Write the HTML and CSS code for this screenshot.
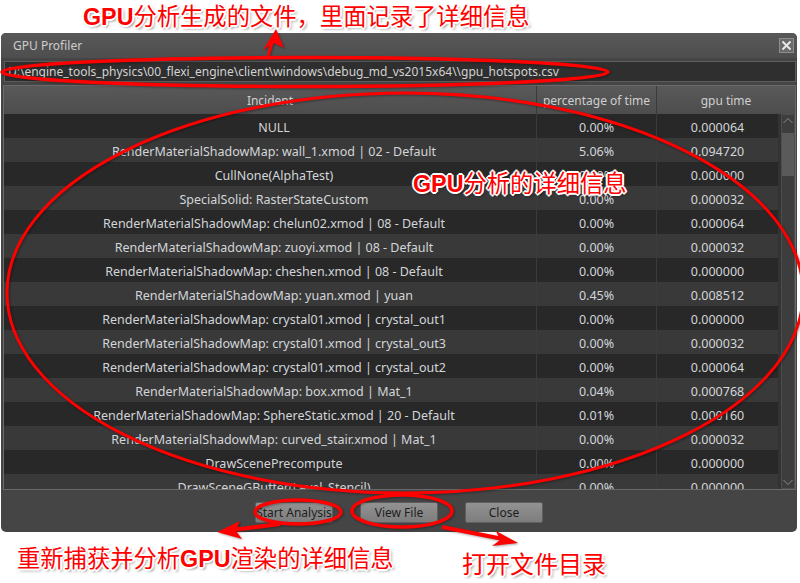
FILE: index.html
```html
<!DOCTYPE html>
<html lang="zh-CN">
<head>
<meta charset="utf-8">
<link rel="stylesheet" href="styles.css">
</head>
<body>
<div class="page">
  <div class="window">
    <div class="titlebar">
      <span class="title">GPU Profiler</span>
      <div class="close"><svg width="13" height="13" viewBox="0 0 13 13"><path d="M2.5 2.5 L10.5 10.5 M10.5 2.5 L2.5 10.5" stroke="#e8e8e8" stroke-width="2"/></svg></div>
    </div>
    <div class="pathbar">D:\engine_tools_physics\00_flexi_engine\client\windows\debug_md_vs2015x64\\gpu_hotspots.csv</div>
    <div class="table">
      <div class="thead">
        <div class="th">Incident</div>
        <div class="th">percentage of time</div>
        <div class="th">gpu time</div>
      </div>
      <div class="tbody">
        <div class="rows">
          <div class="row"><div class="td">NULL</div><div class="td">0.00%</div><div class="td">0.000064</div></div>
          <div class="row"><div class="td">RenderMaterialShadowMap: wall_1.xmod | 02 - Default</div><div class="td">5.06%</div><div class="td">0.094720</div></div>
          <div class="row"><div class="td">CullNone(AlphaTest)</div><div class="td">0.00%</div><div class="td">0.000000</div></div>
          <div class="row"><div class="td">SpecialSolid: RasterStateCustom</div><div class="td">0.00%</div><div class="td">0.000032</div></div>
          <div class="row"><div class="td">RenderMaterialShadowMap: chelun02.xmod | 08 - Default</div><div class="td">0.00%</div><div class="td">0.000064</div></div>
          <div class="row"><div class="td">RenderMaterialShadowMap: zuoyi.xmod | 08 - Default</div><div class="td">0.00%</div><div class="td">0.000032</div></div>
          <div class="row"><div class="td">RenderMaterialShadowMap: cheshen.xmod | 08 - Default</div><div class="td">0.00%</div><div class="td">0.000000</div></div>
          <div class="row"><div class="td">RenderMaterialShadowMap: yuan.xmod | yuan</div><div class="td">0.45%</div><div class="td">0.008512</div></div>
          <div class="row"><div class="td">RenderMaterialShadowMap: crystal01.xmod | crystal_out1</div><div class="td">0.00%</div><div class="td">0.000000</div></div>
          <div class="row"><div class="td">RenderMaterialShadowMap: crystal01.xmod | crystal_out3</div><div class="td">0.00%</div><div class="td">0.000032</div></div>
          <div class="row"><div class="td">RenderMaterialShadowMap: crystal01.xmod | crystal_out2</div><div class="td">0.00%</div><div class="td">0.000064</div></div>
          <div class="row"><div class="td">RenderMaterialShadowMap: box.xmod | Mat_1</div><div class="td">0.04%</div><div class="td">0.000768</div></div>
          <div class="row"><div class="td">RenderMaterialShadowMap: SphereStatic.xmod | 20 - Default</div><div class="td">0.01%</div><div class="td">0.000160</div></div>
          <div class="row"><div class="td">RenderMaterialShadowMap: curved_stair.xmod | Mat_1</div><div class="td">0.00%</div><div class="td">0.000032</div></div>
          <div class="row"><div class="td">DrawScenePrecompute</div><div class="td">0.00%</div><div class="td">0.000000</div></div>
          <div class="row"><div class="td">DrawSceneGBuffer(Level_Stencil)</div><div class="td">0.00%</div><div class="td">0.000000</div></div>
        </div>
        <div class="scrollbar">
          <svg class="chev" width="14" height="12" viewBox="0 0 14 12"><path d="M2.5 8 L7 3.5 L11.5 8" fill="none" stroke="#8a8a8a" stroke-width="1"/></svg>
          <div class="track"><div class="thumb"></div></div>
          <svg class="chev" width="14" height="12" viewBox="0 0 14 12"><path d="M2.5 4 L7 8.5 L11.5 4" fill="none" stroke="#8a8a8a" stroke-width="1"/></svg>
        </div>
      </div>
    </div>
    <div class="buttons">
      <div class="btn">Start Analysis</div>
      <div class="btn">View File</div>
      <div class="btn">Close</div>
    </div>
  </div>

  <svg class="marks" width="800" height="583" viewBox="0 0 800 583">
    <g fill="none" stroke="#ff0000" stroke-width="3.5">
      <ellipse cx="305" cy="72" rx="303" ry="14.5"/>
      <ellipse cx="405" cy="293" rx="398" ry="200" stroke-width="3"/>
      <ellipse cx="298" cy="512" rx="43" ry="12"/>
      <ellipse cx="402" cy="511" rx="50" ry="16"/>
      <path d="M280 524 L232 530" stroke-width="4"/>
      <path d="M442 527 L503 539" stroke-width="4"/>
      <path d="M268 56 L273 40" stroke-width="3"/>
    </g>
    <g fill="#ff0000">
      <path d="M217 532 L240 521 L236 531 L242 539 Z"/>
      <path d="M518 543 L496 531 L500 540 L492 546 Z"/>
      <path d="M276 29 L284 48 L274 43 L263 50 Z"/>
    </g>
  </svg>

  <div class="note n-top"><b>GPU</b>分析生成的文件，里面记录了详细信息</div>
  <div class="note n-mid"><b>GPU</b>分析的详细信息</div>
  <div class="note n-left">重新捕获并分析<b>GPU</b>渲染的详细信息</div>
  <div class="note n-right">打开文件目录</div>
</div>
</body>
</html>
```
FILE: styles.css
```css
html, body {
  margin: 0;
  padding: 0;
}
body {
  width: 800px;
  height: 583px;
  overflow: hidden;
  background: #ffffff;
  font-family: "Noto Sans", "DejaVu Sans", sans-serif;
}
.page {
  position: relative;
  width: 800px;
  height: 583px;
  padding-top: 33px;
  box-sizing: border-box;
}
.window {
  margin-left: 1px;
  width: 796px;
  height: 499px;
  background: #454545;
  border-radius: 5px;
  display: flex;
  flex-direction: column;
  overflow: hidden;
  box-sizing: border-box;
}
.titlebar {
  height: 25px;
  flex: none;
  background: linear-gradient(#585858, #4e4e4e);
  display: flex;
  align-items: center;
  justify-content: space-between;
  padding: 0 3px 0 12px;
}
.title {
  font-size: 12px;
  color: #cdcdcd;
}
.close {
  width: 15px;
  height: 15px;
  background: #6b6b6b;
  border: 1px solid #8c8c8c;
  box-sizing: border-box;
  display: flex;
  align-items: center;
  justify-content: center;
}
.close svg {
  display: block;
}
.pathbar {
  flex: none;
  margin: 3px 1px 0 3px;
  height: 21px;
  background: #2f2f2f;
  border: 1px solid #5c5c5c;
  box-sizing: border-box;
  padding-left: 3px;
  font-size: 12px;
  line-height: 19px;
  color: #d2d2d2;
  white-space: nowrap;
  overflow: hidden;
}
.table {
  flex: none;
  margin: 3px 1px 0 2px;
  height: 405px;
  border: 1px solid #6a6a6a;
  box-sizing: border-box;
  background: #333333;
  display: flex;
  flex-direction: column;
}
.thead {
  height: 28px;
  flex: none;
  display: grid;
  grid-template-columns: 532px 119px 1fr;
  column-gap: 1px;
  background: #3a3a3a;
}
.th {
  background: linear-gradient(#595959, #4d4d4d);
  color: #cfcfcf;
  font-size: 12px;
  display: flex;
  align-items: center;
  justify-content: center;
}
.tbody {
  flex: 1;
  display: flex;
  overflow: hidden;
}
.rows {
  width: 774px;
  flex: none;
  overflow: hidden;
}
.row {
  height: 24px;
  display: grid;
  grid-template-columns: 532px 119px 121px;
  column-gap: 1px;
  background: #3b3b3b;
}
.td {
  font-size: 12.5px;
  color: #d3d5d8;
  display: flex;
  align-items: center;
  justify-content: center;
  padding-top: 3px;
  box-sizing: border-box;
  white-space: nowrap;
  overflow: hidden;
  background: #393939;
}
.td:first-child {
  padding-left: 8px;
}
.row:nth-child(odd) .td {
  background: #282828;
}
.scrollbar {
  margin-left: 3px;
  width: 14px;
  flex: none;
  display: flex;
  flex-direction: column;
  background: #3d3d3d;
  border: 1px solid #4e4e4e;
  box-sizing: border-box;
}
.chev {
  display: block;
  flex: none;
  margin-left: -1px;
}
.track {
  flex: 1;
  padding-top: 6px;
}
.thumb {
  height: 43px;
  background: #5a5a5a;
}
.buttons {
  flex: 1;
  display: flex;
  justify-content: center;
  align-items: center;
  gap: 27px;
  padding-top: 2px;
}
.btn {
  width: 78px;
  height: 21px;
  box-sizing: border-box;
  background: linear-gradient(#929292, #7d7d7d);
  border: 1px solid #5e5e5e;
  border-radius: 2px;
  font-size: 12px;
  color: #1e1e1e;
  display: flex;
  align-items: center;
  justify-content: center;
}
.marks {
  position: absolute;
  left: 0;
  top: 0;
  pointer-events: none;
  filter: drop-shadow(1px 1px 1px rgba(0, 0, 0, 0.35));
}
.note {
  position: absolute;
  font-family: "Noto Sans CJK SC", sans-serif;
  font-size: 23.3px;
  line-height: 26px;
  color: #ff0000;
  white-space: nowrap;
  text-shadow:
    -1px -1px 0 #fff, 1px -1px 0 #fff, -1px 1px 0 #fff, 1px 1px 0 #fff,
    -2px 0 0 #fff, 2px 0 0 #fff, 0 -2px 0 #fff, 0 2px 0 #fff,
    2px 2px 3px rgba(0, 0, 0, 0.55);
}
.note b {
  font-family: "Liberation Sans", sans-serif;
  font-weight: 700;
}
.n-top {
  left: 83px;
  top: 2px;
}
.n-mid {
  left: 413px;
  top: 169px;
}
.n-left {
  left: 17px;
  top: 544px;
}
.n-right {
  left: 462px;
  top: 550px;
  font-size: 24px;
  line-height: 26px;
}
```
